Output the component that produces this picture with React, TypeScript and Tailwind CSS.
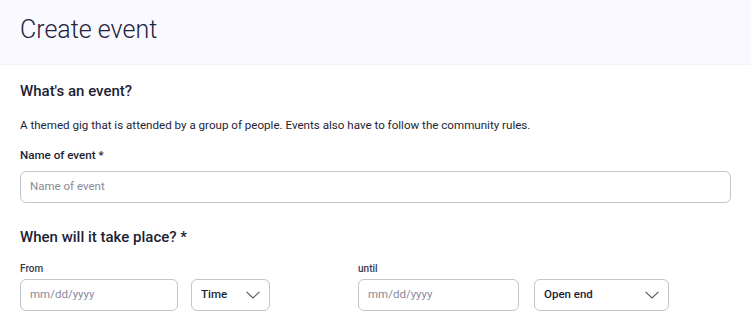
function DateInput({ width }: { width: string }) {
  return (
    <div className={`${width} h-8 rounded-md border border-[#c4c4cc] flex items-center px-[9px] text-[11.5px] text-[#8a8a99]`}>
      mm/dd/yyyy
    </div>
  );
}

function Select({ label, width }: { label: string; width: string }) {
  return (
    <div className={`${width} h-8 rounded-md border border-[#c4c4cc] flex items-center justify-between pl-[9px] pr-[9px] text-[11.5px] font-medium text-[#1e1e35]`}>
      <span>{label}</span>
      <svg width="14" height="8" viewBox="0 0 14 8" fill="none" className="text-[#55556a]">
        <polyline points="0.5,0.8 7,7 13.5,0.8" stroke="currentColor" strokeWidth="1.1" />
      </svg>
    </div>
  );
}

export default function App() {
  return (
    <div className="w-[751px] h-[318px] bg-white overflow-hidden font-['Roboto',sans-serif] text-[#1e1e35]">
      <div className="h-[65px] bg-[#f9f9ff] border-b border-[#f3f2fd] px-5 pt-[17px]">
        <h1 className="text-[25px] font-light text-[#23233d] leading-none">Create event</h1>
      </div>
      <div className="px-5 pt-[16px]">
        <h2 className="text-[15px] font-medium leading-5">What's an event?</h2>
        <p className="mt-[16px] text-[11.6px] leading-4">
          A themed gig that is attended by a group of people. Events also have to follow the community rules.
        </p>
        <label className="block mt-[14px] text-[11.6px] font-medium leading-4">Name of event *</label>
        <div className="mt-[8px] h-8 rounded-md border border-[#c4c4cc] flex items-center px-[9px] text-[11.5px] text-[#8a8a99]">
          Name of event
        </div>
        <h2 className="mt-[24px] text-[15px] font-medium leading-5">When will it take place? *</h2>
        <div className="mt-[16px] flex">
          <div className="w-[338px]">
            <div className="text-[10px] font-medium leading-3 text-[#3a3a4d]">From</div>
            <div className="mt-[4px] flex gap-[13px]">
              <DateInput width="w-[158px]" />
              <Select label="Time" width="w-[79px]" />
            </div>
          </div>
          <div>
            <div className="text-[10px] font-medium leading-3 text-[#3a3a4d]">until</div>
            <div className="mt-[4px] flex gap-[15px]">
              <DateInput width="w-[161px]" />
              <Select label="Open end" width="w-[135px]" />
            </div>
          </div>
        </div>
      </div>
    </div>
  );
}
